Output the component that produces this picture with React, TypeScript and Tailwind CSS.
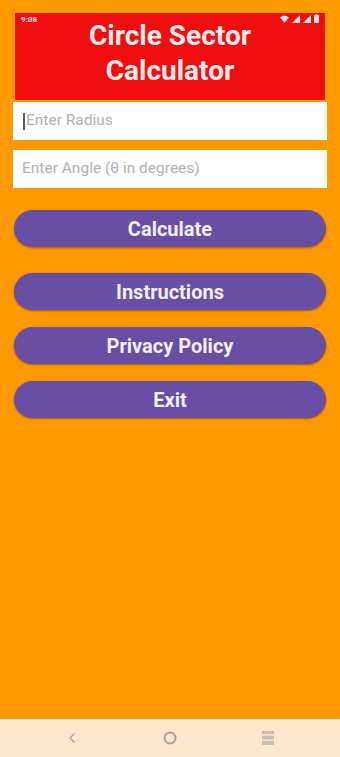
import { ChevronLeft } from "lucide-react"

function StatusIcons() {
  return (
    <div className="absolute right-[6px] top-[1px] flex items-center gap-[3px] text-[#fde2e2]">
      <svg width="9" height="8" viewBox="0 0 9 8" fill="currentColor">
        <path d="M0 2.5 C2.5 0 6.5 0 9 2.5 L4.5 8 Z" />
      </svg>
      <svg width="8" height="8" viewBox="0 0 8 8" fill="currentColor">
        <path d="M8 0 L8 8 L0 8 Z" />
      </svg>
      <svg width="8" height="8" viewBox="0 0 8 8" fill="currentColor">
        <path d="M8 0 L8 8 L0 8 Z" />
      </svg>
      <svg width="5" height="9" viewBox="0 0 5 9" fill="currentColor">
        <rect x="1.5" y="0" width="2" height="1" />
        <rect x="0" y="1" width="5" height="8" rx="0.5" />
      </svg>
    </div>
  )
}

function ActionButton({ label }: { label: string }) {
  return (
    <button className="h-[37px] w-full rounded-full bg-[#6750a4] text-[20px] font-bold text-[#f2eefa] shadow-[0_1px_2px_rgba(80,20,20,0.5)]">
      {label}
    </button>
  )
}

export default function App() {
  return (
    <div
      className="flex min-h-[757px] w-[340px] flex-col bg-[#fe9900]"
      style={{ fontFamily: "Roboto, 'Noto Sans', sans-serif" }}
    >
      <div className="px-[15px] pt-[13px]">
        <div className="relative h-[87px] bg-[#f00d0d] pt-[5px] text-center">
          <span className="absolute left-[6px] top-[1px] text-[8px] font-bold text-[#fde2e2]">9:08</span>
          <StatusIcons />
          <h1 className="text-[28px] font-bold leading-[35px] text-[#fdeaea]">
            Circle Sector
            <br />
            Calculator
          </h1>
        </div>
      </div>

      <div className="flex flex-col gap-[10px] px-[13px] pt-[2px]">
        <div className="flex h-[38px] items-center bg-white px-[10px]">
          <span className="mr-[1px] h-[17px] w-[2px] bg-[#5b5b6b]" />
          <span className="text-[15.5px] text-[#b3b3b3]">Enter Radius</span>
        </div>
        <div className="flex h-[38px] items-center bg-white px-[9px]">
          <span className="text-[15.5px] text-[#b3b3b3]">Enter Angle (θ in degrees)</span>
        </div>
      </div>

      <div className="flex flex-col px-[14px] pt-[22px]">
        <ActionButton label="Calculate" />
        <div className="mt-[26px] flex flex-col gap-[17px]">
          <ActionButton label="Instructions" />
          <ActionButton label="Privacy Policy" />
          <ActionButton label="Exit" />
        </div>
      </div>

      <div className="flex-1" />

      <div className="flex h-[38px] items-center justify-center bg-[#fde6cd] text-[#aaa197]">
        <div className="flex w-[98px] justify-center">
          <ChevronLeft size={16} strokeWidth={2} />
        </div>
        <div className="flex w-[98px] justify-center">
          <svg width="14" height="14" viewBox="0 0 14 14" fill="none" stroke="currentColor" strokeWidth="2">
            <circle cx="7" cy="7" r="5.5" />
          </svg>
        </div>
        <div className="flex w-[98px] justify-center">
          <svg width="12" height="14" viewBox="0 0 12 14" fill="currentColor" opacity="0.6">
            <rect x="0" y="0" width="12" height="3" />
            <rect x="0" y="4.5" width="12" height="4" />
            <rect x="0" y="10" width="12" height="4" />
          </svg>
        </div>
      </div>
    </div>
  )
}
